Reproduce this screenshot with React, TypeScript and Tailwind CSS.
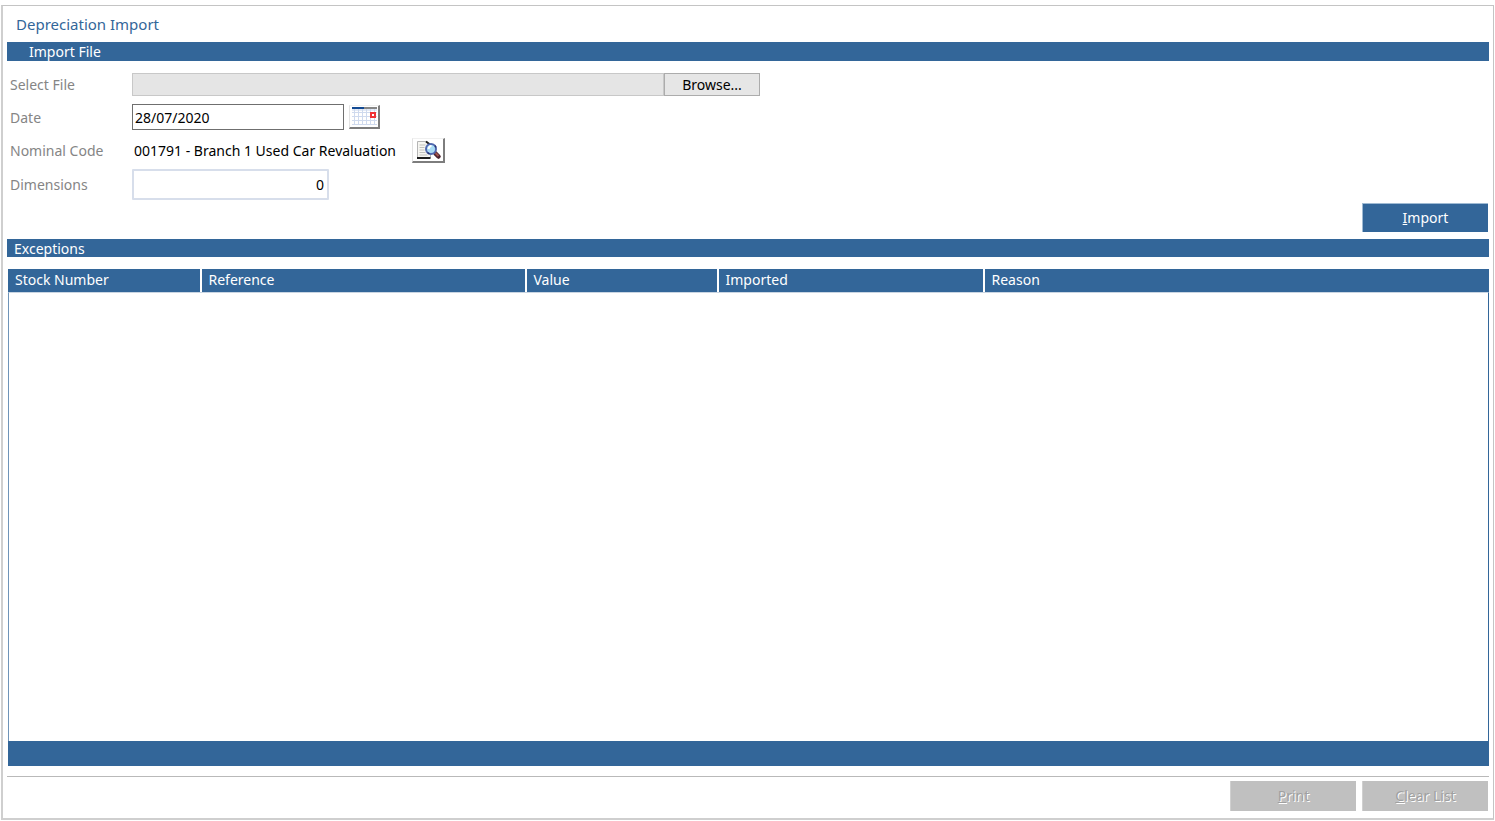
import type { ReactNode } from 'react';

const columns = [
  { label: 'Stock Number', width: 'w-[193px]' },
  { label: 'Reference', width: 'w-[325px]' },
  { label: 'Value', width: 'w-[192px]' },
  { label: 'Imported', width: 'w-[266px]' },
  { label: 'Reason', width: '' },
];

function CalendarIcon() {
  return (
    <svg width="25" height="20" viewBox="0 0 25 20" shapeRendering="crispEdges" aria-hidden="true">
      <rect width="25" height="20" fill="#fff" />
      <rect width="12" height="2" fill="#134a93" />
      <rect x="12" width="13" height="2" fill="#868686" />
      <rect y="2" width="25" height="2" fill="#e3eaf6" />
      <path
        d="M0 5.500h25M0 9.500h25M0 13.500h25M0 17.500h25M2.500 2v16M6.500 2v16M10.500 2v16M14.500 2v16M18.500 2v16M22.500 2v16"
        stroke="#cfdaee"
        fill="none"
      />
      <rect x="18" y="5" width="6" height="6" fill="#ef3236" />
      <rect x="20" y="7" width="2" height="2" fill="#fff" />
    </svg>
  );
}

function LookupIcon() {
  return (
    <svg width="27" height="21" viewBox="0 0 27 21" aria-hidden="true">
      <path d="M2.500 1.500h9l4 4v12h-13z" fill="#f6f6f2" stroke="#b5b5b5" />
      <path d="M2 18h13.500M11 1.500l4 3" stroke="#1d1d1d" strokeWidth="2" fill="none" />
      <path d="M4.500 5h6M4.500 7.500h5M4.500 10h5M4.500 12.500h6M4.500 15h8" stroke="#c2c2bd" />
      <path d="M20.500 13.500l3 3" stroke="#4b2330" strokeWidth="4.500" strokeLinecap="round" />
      <path d="M20.500 13l3 3" stroke="#a3554f" strokeWidth="2" />
      <circle cx="16" cy="9" r="5" fill="#a9dcf5" stroke="#5068b0" strokeWidth="2" />
      <path d="M12.500 12.500l2 1.500M20 5.500l1 2" stroke="#27346e" strokeWidth="1.500" />
      <path d="M13.500 9q.5-3 3-3" stroke="#fff" strokeWidth="2" fill="none" />
    </svg>
  );
}

function IconButton({ label, children }: { label: string; children: ReactNode }) {
  return (
    <button
      type="button"
      aria-label={label}
      className="flex items-center justify-center border-t border-r-2 border-b-2 border-l border-t-[#f0f0f0] border-r-[#7d7d7d] border-b-[#7d7d7d] border-l-[#e3e3e3] bg-white pt-px pr-px pl-0.5"
    >
      {children}
    </button>
  );
}

function FormRow({ label, htmlFor, height, children }: { label: string; htmlFor: string; height: string; children: ReactNode }) {
  return (
    <div className={`flex items-center ${height}`}>
      <label htmlFor={htmlFor} className="w-[125px] shrink-0 pt-px pl-[3px] text-[#858585]">
        {label}
      </label>
      {children}
    </div>
  );
}

function FooterButton({ first, rest }: { first: string; rest: string }) {
  return (
    <button
      type="button"
      disabled
      className="h-[30px] w-[126px] border-l border-[#d0d0d0] bg-[#c0c0c0] text-[#a0a0a0] [text-shadow:1px_1px_0_#fff]"
    >
      <span className="underline">{first}</span>
      {rest}
    </button>
  );
}

export default function App() {
  return (
    <div className="h-screen min-h-[480px] bg-white px-px pt-[5px] pb-px font-['Noto_Sans',sans-serif] text-[14px] leading-[18px] text-black">
      <main className="flex h-full flex-col border-t border-r border-b-2 border-l-2 border-t-[#c4c4c4] border-r-[#c4c4c4] border-b-[#cfcfcf] border-l-[#cfcfcf] pr-1 pb-[7px] pl-1">
        <h1 className="flex h-9 items-center pl-[9px] text-[15px] text-[#336699]">Depreciation Import</h1>

        <h2 className="h-[19px] bg-[#336699] pl-[22px] leading-5 text-white">Import File</h2>
        <form className="flex flex-col pt-2" onSubmit={(event) => event.preventDefault()}>
          <FormRow label="Select File" htmlFor="file-path" height="h-[31px]">
            <input
              id="file-path"
              type="text"
              readOnly
              className="h-[23px] w-[532px] border border-[#c8c8c8] bg-[#e5e5e5]"
            />
            <button type="button" className="flex h-[23px] w-24 items-center justify-center border border-[#acacac] bg-[#e6e6e6]">
              Browse...
            </button>
          </FormRow>
          <FormRow label="Date" htmlFor="date" height="h-[34px]">
            <input
              id="date"
              type="text"
              defaultValue="28/07/2020"
              className="mr-[5px] h-[26px] w-[212px] border border-[#6f6f6f] bg-white px-0.5"
            />
            <IconButton label="Choose date">
              <CalendarIcon />
            </IconButton>
          </FormRow>
          <FormRow label="Nominal Code" htmlFor="nominal-code" height="h-8">
            <output id="nominal-code" className="mr-2 w-[272px] pt-px pl-0.5 whitespace-nowrap">
              001791 - Branch 1 Used Car Revaluation
            </output>
            <IconButton label="Look up nominal code">
              <LookupIcon />
            </IconButton>
          </FormRow>
          <FormRow label="Dimensions" htmlFor="dimensions" height="h-9">
            <input
              id="dimensions"
              type="text"
              defaultValue="0"
              className="h-[31px] w-[197px] rounded-[1px] border-2 border-[#d7deeb] bg-white px-[3px] text-right"
            />
          </FormRow>
          <div className="flex justify-end pt-px pr-px">
            <button
              type="button"
              className="h-[29px] w-[126px] border-t border-l border-[#9fbad3] bg-[#336699] text-white"
            >
              <span className="underline">I</span>mport
            </button>
          </div>
        </form>

        <h2 className="mt-[7px] h-[18px] bg-[#336699] pl-[7px] leading-5 text-white">Exceptions</h2>

        <section className="mt-3 flex min-h-0 flex-1 flex-col" aria-label="Exceptions">
          <table className="w-full table-fixed border-collapse border-l border-white bg-[#336699] text-left text-white">
            <thead>
              <tr className="h-[23px]">
                {columns.map((column) => (
                  <th
                    key={column.label}
                    scope="col"
                    className={`${column.width} border-r-2 border-white px-[7px] pt-0 pb-0.5 font-normal last:border-r-0`}
                  >
                    {column.label}
                  </th>
                ))}
              </tr>
            </thead>
          </table>
          <div className="ml-px min-h-0 flex-1 border-t border-r border-l border-t-[#c9d5e2] border-r-[#336699] border-l-[#6f94b8]" />
          <div className="ml-px h-[25px] shrink-0 bg-[#336699]" />
        </section>

        <footer className="mt-2.5 flex shrink-0 justify-end gap-1.5 border-t border-[#b9b9b9] pt-1 pr-px">
          <FooterButton first="P" rest="rint" />
          <FooterButton first="C" rest="lear List" />
        </footer>
      </main>
    </div>
  );
}
